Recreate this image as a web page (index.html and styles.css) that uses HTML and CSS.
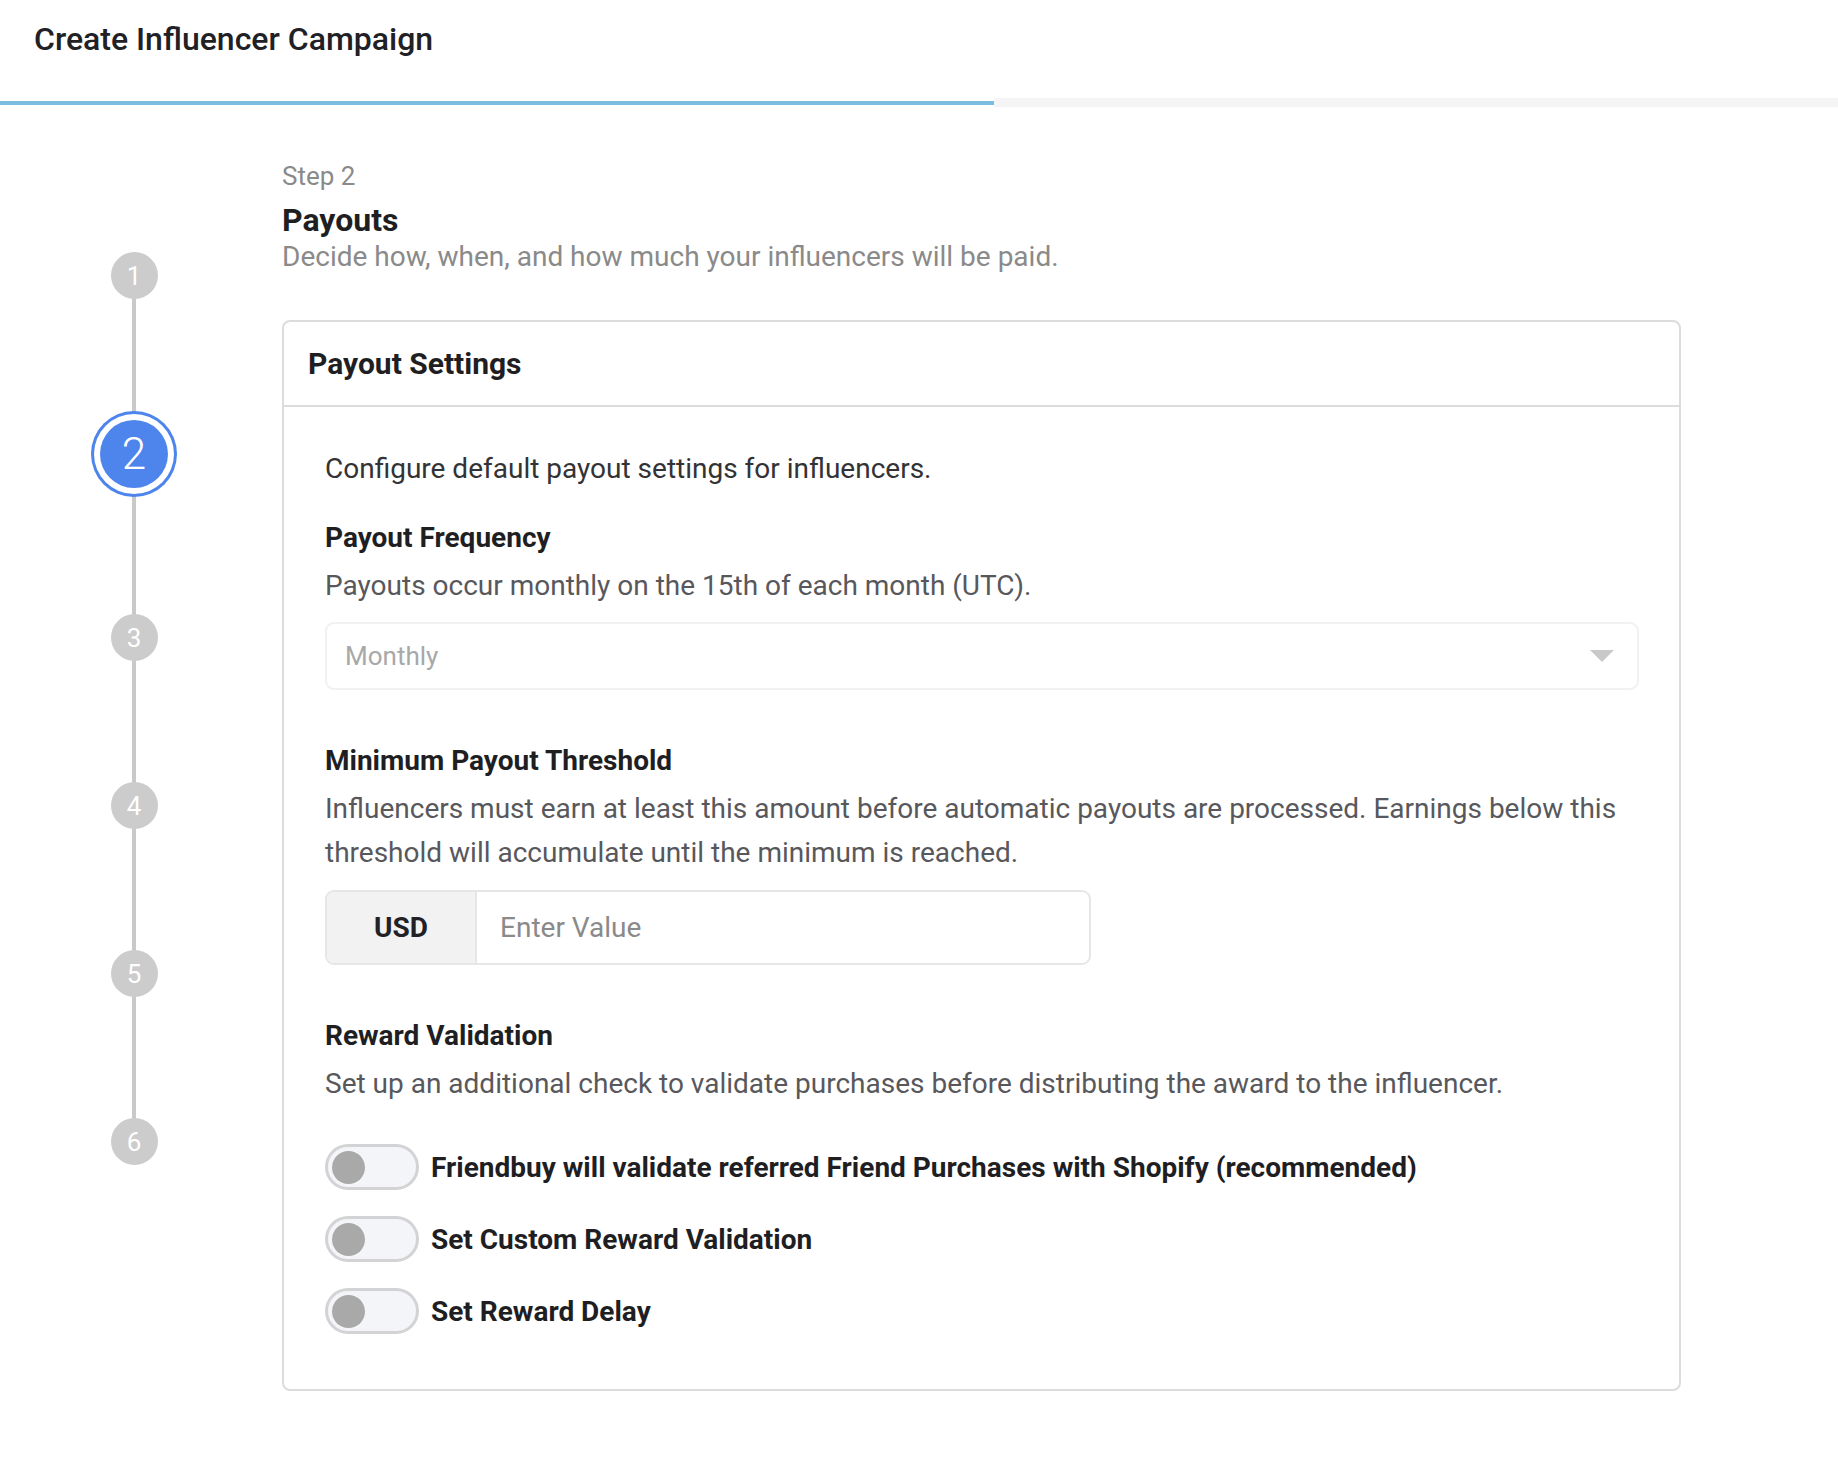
FILE: index.html
```html
<!DOCTYPE html>
<html lang="en">
<head>
<meta charset="utf-8">
<title>Create Influencer Campaign</title>
<link rel="stylesheet" href="styles.css">
</head>
<body>
<header class="topbar">
  <h1 class="page-title">Create Influencer Campaign</h1>
</header>
<div class="progress">
  <div class="progress-done"></div>
  <div class="progress-rest"></div>
</div>

<main class="wizard">
  <nav class="stepper">
    <ol class="steps">
      <li class="step">1</li>
      <li class="step step-active">2</li>
      <li class="step">3</li>
      <li class="step">4</li>
      <li class="step">5</li>
      <li class="step">6</li>
    </ol>
  </nav>

  <section class="content">
    <div class="step-label">Step 2</div>
    <h2 class="step-title">Payouts</h2>
    <p class="step-desc">Decide how, when, and how much your influencers will be paid.</p>

    <div class="card">
      <div class="card-header">Payout Settings</div>
      <div class="card-body">
        <p class="intro">Configure default payout settings for influencers.</p>

        <h3 class="field-title">Payout Frequency</h3>
        <p class="field-help">Payouts occur monthly on the 15th of each month (UTC).</p>
        <div class="select">
          <span class="select-value">Monthly</span>
          <span class="select-caret"></span>
        </div>

        <h3 class="field-title field-gap">Minimum Payout Threshold</h3>
        <p class="field-help">Influencers must earn at least this amount before automatic payouts are processed. Earnings below this threshold will accumulate until the minimum is reached.</p>
        <div class="input-group">
          <span class="input-addon">USD</span>
          <span class="input-field">Enter Value</span>
        </div>

        <h3 class="field-title field-gap">Reward Validation</h3>
        <p class="field-help">Set up an additional check to validate purchases before distributing the award to the influencer.</p>
        <div class="toggles">
          <label class="toggle-row"><span class="toggle"><span class="knob"></span></span><span class="toggle-label">Friendbuy will validate referred Friend Purchases with Shopify (recommended)</span></label>
          <label class="toggle-row"><span class="toggle"><span class="knob"></span></span><span class="toggle-label">Set Custom Reward Validation</span></label>
          <label class="toggle-row"><span class="toggle"><span class="knob"></span></span><span class="toggle-label">Set Reward Delay</span></label>
        </div>
      </div>
    </div>
  </section>
</main>
</body>
</html>
```

FILE: styles.css
```css
* {
  box-sizing: border-box;
}

body {
  margin: 0;
  background: #ffffff;
  font-family: Roboto, "Liberation Sans", Arial, sans-serif;
  color: #222226;
}

/* top bar */
.topbar {
  height: 98px;
  padding: 20px 0 0 34px;
}

.page-title {
  margin: 0;
  font-size: 32px;
  font-weight: 500;
  line-height: 38px;
  color: #212125;
}

.progress {
  display: flex;
  align-items: center;
  height: 9px;
}

.progress-done {
  width: 994px;
  height: 4px;
  background: #7bbde1;
}

.progress-rest {
  flex: 1;
  height: 9px;
  background: #f5f5f5;
}

/* layout */
.wizard {
  display: flex;
  padding-top: 54px;
}

.stepper {
  width: 282px;
  flex: none;
  padding-top: 91px;
  padding-left: 110px;
}

.steps {
  position: relative;
  list-style: none;
  margin: 0;
  padding: 0;
  width: 48px;
  display: flex;
  flex-direction: column;
  align-items: center;
}

/* the rail joining the step dots */
.steps::before {
  content: "";
  position: absolute;
  left: 22px;
  top: 24px;
  bottom: 24px;
  width: 4px;
  background: #c9c9c9;
}

.step {
  position: relative;
  width: 47px;
  height: 47px;
  border-radius: 50%;
  background: #cccccc;
  color: #ffffff;
  font-size: 26px;
  font-weight: 400;
  display: flex;
  align-items: center;
  justify-content: center;
  margin-top: 121px;
}

.step:first-child {
  margin-top: 0;
}

.step-active {
  width: 68px;
  height: 68px;
  background: #4e85ec;
  font-size: 44px;
  font-weight: 300;
  box-shadow: 0 0 0 6px #ffffff, 0 0 0 9px #4e85ec;
  margin-top: 121px;
  margin-bottom: 5px;
}

.content {
  width: 1399px;
  flex: none;
}

.step-label {
  font-size: 26px;
  line-height: 30px;
  color: #8a8a8a;
}

.step-title {
  margin: 10px 0 0;
  font-size: 32px;
  font-weight: 700;
  line-height: 38px;
  color: #1f1f23;
}

.step-desc {
  margin: 0;
  font-size: 28px;
  line-height: 36px;
  color: #8a8a8a;
}

/* card */
.card {
  margin-top: 45px;
  border: 2px solid #dcdcdc;
  border-radius: 8px;
}

.card-header {
  height: 85px;
  padding-left: 24px;
  display: flex;
  align-items: center;
  border-bottom: 2px solid #dcdcdc;
  font-size: 30px;
  font-weight: 700;
  color: #1f1f23;
}

.card-body {
  padding: 40px 40px 55px 41px;
}

.intro {
  margin: 0;
  font-size: 28px;
  line-height: 44px;
  color: #333336;
}

.field-title {
  margin: 25px 0 0;
  font-size: 28px;
  font-weight: 700;
  line-height: 44px;
  color: #1f1f23;
}

.field-gap {
  margin-top: 49px;
}

.field-help {
  margin: 4px 0 0;
  font-size: 28px;
  line-height: 44px;
  color: #58585c;
}

/* select */
.select {
  margin-top: 14px;
  height: 68px;
  border: 2px solid #f1f1f1;
  border-radius: 9px;
  display: flex;
  align-items: center;
  justify-content: space-between;
  padding: 0 23px 0 18px;
}

.select-value {
  font-size: 26px;
  color: #a8a8a8;
}

.select-caret {
  width: 0;
  height: 0;
  border-left: 12px solid transparent;
  border-right: 12px solid transparent;
  border-top: 12px solid #c9c9c9;
}

/* input with currency addon */
.input-group {
  margin-top: 15px;
  width: 766px;
  height: 75px;
  border: 2px solid #e6e6e6;
  border-radius: 9px;
  display: flex;
  overflow: hidden;
}

.input-addon {
  width: 150px;
  flex: none;
  background: #f2f2f2;
  border-right: 2px solid #e6e6e6;
  display: flex;
  align-items: center;
  justify-content: center;
  font-size: 28px;
  font-weight: 700;
  color: #222226;
}

.input-field {
  flex: 1;
  display: flex;
  align-items: center;
  padding-left: 23px;
  font-size: 28px;
  color: #8a8a8a;
}

/* toggles */
.toggles {
  margin-top: 38px;
  display: flex;
  flex-direction: column;
  gap: 26px;
}

.toggle-row {
  display: flex;
  align-items: center;
  gap: 12px;
}

.toggle {
  width: 94px;
  height: 46px;
  flex: none;
  border: 3px solid #d3d3d5;
  border-radius: 23px;
  background: #f4f5f9;
  display: flex;
  align-items: center;
  padding-left: 4px;
}

.knob {
  width: 33px;
  height: 33px;
  border-radius: 50%;
  background: #a9a9a9;
}

.toggle-label {
  font-size: 28px;
  font-weight: 700;
  color: #1f1f23;
}
```
